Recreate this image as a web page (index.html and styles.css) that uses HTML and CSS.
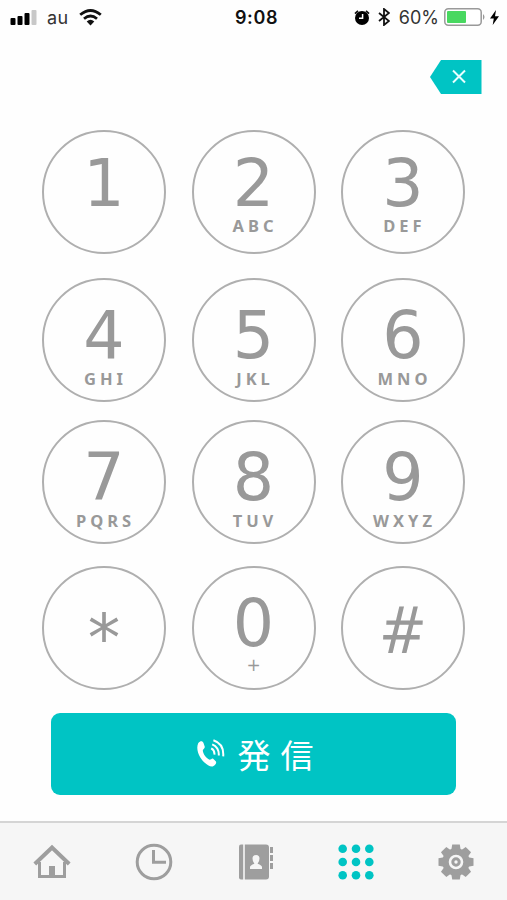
FILE: index.html
```
<!DOCTYPE html>
<html lang="ja">
  <head>
    <meta charset="UTF-8" />
    <meta name="viewport" content="width=device-width, initial-scale=1.0" />
    <title>発信</title>
    <link rel="stylesheet" href="styles.css" />
  </head>
  <body>
    <header class="status-bar">
      <div class="status-left">
        <svg class="signal" width="27" height="17" viewBox="0 0 27 17">
          <rect x="0.5" y="9" width="5" height="7" rx="1" />
          <rect x="7.5" y="7" width="5" height="9" rx="1" />
          <rect x="14.5" y="4" width="5" height="12" rx="1" />
          <rect class="off" x="21.5" y="1" width="5" height="15" rx="1" />
        </svg>
        <span class="carrier">au</span>
        <svg class="wifi" width="23" height="17" viewBox="0 0 23 17">
          <path d="M1.2 5.8Q11.5-2.8 21.8 5.8" />
          <path d="M5 9.7Q11.5 4.2 18 9.7" />
          <path class="fill" d="M7.7 12.4Q11.5 9.3 15.3 12.4L11.5 16.4Z" />
        </svg>
      </div>
      <div class="time">9:08</div>
      <div class="status-right">
        <svg width="16" height="17" viewBox="0 0 16 17">
          <circle cx="8" cy="9" r="7" />
          <path class="stroke" d="M1 4.6L4 1.9M15 4.6L12 1.9" />
          <path class="hand" d="M8.6 5V9.3H5" />
        </svg>
        <svg class="bluetooth" width="12" height="18" viewBox="0 0 12 18">
          <path class="stroke" d="M1 5L11 13L6 17V1L11 5L1 13" />
        </svg>
        <span class="percent">60%</span>
        <svg class="battery" width="42" height="18" viewBox="0 0 42 18">
          <rect class="case" x="0.8" y="0.8" width="36.4" height="16.4" rx="3.5" />
          <rect class="charge" x="3" y="3" width="19" height="12" rx="1" />
          <path class="cap" d="M39 6Q42 9 39 12Z" />
        </svg>
        <svg width="9" height="15" viewBox="0 0 9 15">
          <path d="M6 0L0 8.4H3.8L2.7 15L9 6.2H5Z" />
        </svg>
      </div>
    </header>

    <div class="display">
      <button class="delete" aria-label="削除">
        <svg width="52" height="34" viewBox="0 0 52 34">
          <path class="tag" d="M0 17L11 0H51.5V34H11Z" />
          <path class="cross" d="M23 10.5L35 22.5M35 10.5L23 22.5" />
        </svg>
      </button>
    </div>

    <main class="keypad">
      <div class="row row-first">
        <button class="key"><span class="num">1</span></button>
        <button class="key"><span class="num">2</span><span class="sub">ABC</span></button>
        <button class="key"><span class="num">3</span><span class="sub">DEF</span></button>
      </div>
      <div class="row row-second">
        <button class="key"><span class="num">4</span><span class="sub">GHI</span></button>
        <button class="key"><span class="num">5</span><span class="sub">JKL</span></button>
        <button class="key"><span class="num">6</span><span class="sub">MNO</span></button>
      </div>
      <div class="row">
        <button class="key"><span class="num">7</span><span class="sub">PQRS</span></button>
        <button class="key"><span class="num">8</span><span class="sub">TUV</span></button>
        <button class="key"><span class="num">9</span><span class="sub">WXYZ</span></button>
      </div>
      <div class="row row-last">
        <button class="key star"><span class="num">*</span></button>
        <button class="key"><span class="num">0</span><span class="sub plus">+</span></button>
        <button class="key hash"><span class="num">#</span></button>
      </div>
    </main>

    <button class="call">
      <svg width="29" height="29" viewBox="0 0 29 29">
        <path d="M2.2 4.2C4.5 1.3 6.6 1.8 7.5 4L8.7 7.4C9.2 9 7.2 10 6.8 11.2C7 15 10 19 13.6 20.8C14.9 20.8 15.9 19 17.2 19.7L19.7 22.2C21 23.6 19.5 26 17.1 27.3C11 29.2-2.3 14.5 2.2 4.2Z" />
        <path class="wave" d="M15.2 9.4Q18.8 11.2 18.4 15.7M16.2 5.3Q23.2 8.3 22.8 16.5M17.4 1.2Q28.2 4.7 27.2 17.3" />
      </svg>
      <span>発信</span>
    </button>

    <nav class="tabs">
      <a class="tab">
        <svg width="38" height="36" viewBox="0 0 38 36">
          <path class="line" d="M6.5 18V32.5H31.5V18" />
          <path class="line roof" d="M1.8 20L19 3.5L36.2 20" />
          <path d="M16 22H22V33H16Z" />
        </svg>
      </a>
      <a class="tab">
        <svg width="38" height="38" viewBox="0 0 38 38">
          <circle class="line" cx="19" cy="19" r="16.8" />
          <path class="line hands" d="M18.5 7V19.3H31" />
        </svg>
      </a>
      <a class="tab">
        <svg width="36" height="36" viewBox="0 0 36 36">
          <path d="M3 0.5H5.2V35.5H3Q1 35.5 1 33.5V2.5Q1 0.5 3 0.5Z" />
          <path d="M6.8 0.5H28Q31 0.5 31 3.5V32.5Q31 35.5 28 35.5H6.8Z" />
          <path d="M32 3H35V9H32ZM32 11H35V17H32ZM32 19H35V25H32Z" />
          <path class="person" d="M12 25V23Q12 21.5 16.4 19.8Q14.5 17.5 14.5 14.5Q14.5 11 18 11Q21.5 11 21.5 14.5Q21.5 17.5 19.6 19.8Q24 21.5 24 23V25Z" />
        </svg>
      </a>
      <a class="tab active">
        <svg width="36" height="36" viewBox="0 0 36 36">
          <circle cx="4.7" cy="4.7" r="4.3" /><circle cx="18" cy="4.7" r="4.3" /><circle cx="31.3" cy="4.7" r="4.3" />
          <circle cx="4.7" cy="18" r="4.3" /><circle cx="18" cy="18" r="4.3" /><circle cx="31.3" cy="18" r="4.3" />
          <circle cx="4.7" cy="31.3" r="4.3" /><circle cx="18" cy="31.3" r="4.3" /><circle cx="31.3" cy="31.3" r="4.3" />
        </svg>
      </a>
      <a class="tab">
        <svg width="36" height="36" viewBox="0 0 36 36">
          <circle cx="18" cy="18" r="13.7" />
          <g id="teeth">
            <path d="M13.3 6L14.2 0.5H21.8L22.7 6V30L21.8 35.5H14.2L13.3 30Z" />
            <path d="M6 13.3L0.5 14.2V21.8L6 22.7H30L35.5 21.8V14.2L30 13.3Z" />
          </g>
          <use href="#teeth" transform="rotate(45 18 18)" />
          <circle class="ring" cx="18" cy="18" r="6" />
          <circle class="hole" cx="18" cy="18" r="1.7" />
        </svg>
      </a>
    </nav>
  </body>
</html>
```
FILE: styles.css
```
* {
  box-sizing: border-box;
}
body {
  margin: 0;
  height: 900px;
  display: flex;
  flex-direction: column;
  background: #fefefe;
  font-family: "DejaVu Sans", sans-serif;
  overflow: hidden;
}
button {
  border: none;
  background: none;
  padding: 0;
  margin: 0;
  cursor: pointer;
}
svg {
  display: block;
  flex-shrink: 0;
}

/* status bar */
.status-bar {
  height: 34px;
  padding: 0 8px 0 10px;
  display: grid;
  grid-template-columns: 1fr auto 1fr;
  align-items: center;
  font-family: Inter, sans-serif;
  font-size: 18px;
  color: #111;
}
.status-left,
.status-right {
  display: flex;
  align-items: center;
}
.status-right {
  justify-content: flex-end;
}
.signal .off {
  fill: #c8c8c8;
}
.carrier {
  margin-left: 10px;
  letter-spacing: 0.5px;
  color: #333;
}
.wifi {
  margin-left: 10px;
}
.wifi path {
  fill: none;
  stroke: #111;
  stroke-width: 2.8;
}
.wifi .fill {
  fill: #111;
  stroke: none;
}
.time {
  padding-left: 4px;
  font-weight: 600;
  letter-spacing: 0.6px;
}
.stroke {
  fill: none;
  stroke: #111;
  stroke-width: 1.8;
}
.hand {
  fill: none;
  stroke: #fff;
  stroke-width: 1.5;
}
.bluetooth {
  margin-left: 8px;
}
.percent {
  margin-left: 9px;
  color: #333;
}
.battery {
  margin-left: 5px;
}
.case {
  fill: #fff;
  stroke: #999;
  stroke-width: 1.5;
}
.charge {
  fill: #48d860;
}
.cap {
  fill: #999;
}
.battery + svg {
  margin-left: 4px;
}

/* entered number */
.display {
  height: 96px;
  padding: 26px 25px 0 0;
  display: flex;
  justify-content: flex-end;
  align-items: flex-start;
}
.tag {
  fill: #00c4c4;
}
.cross {
  stroke: #e8ffff;
  stroke-width: 2;
}

/* keypad */
.keypad {
  padding: 0 42px;
}
.row {
  display: flex;
  justify-content: space-between;
  margin-bottom: 22px;
}
.row-first {
  margin-bottom: 24px;
}
.row-second {
  margin-bottom: 18px;
}
.row-last {
  margin-bottom: 22.5px;
}
.key {
  width: 124px;
  height: 124px;
  padding-top: 23px;
  border: 2px solid #afafaf;
  border-radius: 50%;
  display: flex;
  flex-direction: column;
  align-items: center;
  color: #999;
}
.row-first .key {
  padding-top: 19px;
}
.num {
  font: 65px/65px "DejaVu Sans", sans-serif;
}
.sub {
  margin-top: 3px;
  padding-left: 3px;
  font: 700 16.5px/16px "Noto Sans", sans-serif;
  letter-spacing: 4px;
}
.row-first .sub {
  margin-top: 2px;
}
.row-last .plus {
  margin-top: 1px;
  padding-left: 0;
  font: 17px/16px "DejaVu Sans", sans-serif;
  letter-spacing: 0;
}
.row-last .star {
  padding-top: 38px;
}
.row-last .hash {
  padding-top: 28px;
}
.hash .num {
  font-family: "Noto Sans", sans-serif;
  transform: skewX(-3deg);
}

/* call button */
.call {
  align-self: center;
  width: 405px;
  height: 82px;
  border-radius: 9px;
  background: #00c4c4;
  display: flex;
  justify-content: center;
  align-items: center;
  gap: 13px;
  padding-left: 2px;
  color: #fff;
  font: 400 33px/40px "Noto Sans CJK JP", sans-serif;
}
.call span {
  letter-spacing: 10px;
  margin-right: -10px;
}
.call svg {
  fill: #fff;
}
.call .wave {
  fill: none;
  stroke: #fff;
  stroke-width: 2;
}

/* bottom tabs */
.tabs {
  height: 79px;
  margin-top: auto;
  border-top: 2px solid #d5d5d5;
  background: #f6f6f6;
  display: grid;
  grid-template-columns: 103px 101px 103px 97px 103px;
}
.tab {
  display: flex;
  justify-content: center;
  align-items: center;
  color: #9e9e9e;
}
.tab svg {
  fill: currentColor;
}
.tab .line {
  fill: none;
  stroke: currentColor;
  stroke-width: 3;
}
.tab .roof {
  stroke-width: 4;
}
.tab .person {
  fill: #f6f6f6;
}
.tab .ring {
  fill: none;
  stroke: #f6f6f6;
  stroke-width: 2.6;
}
.tab .hole {
  fill: #f6f6f6;
}
.active {
  color: #00c4c4;
}
```
